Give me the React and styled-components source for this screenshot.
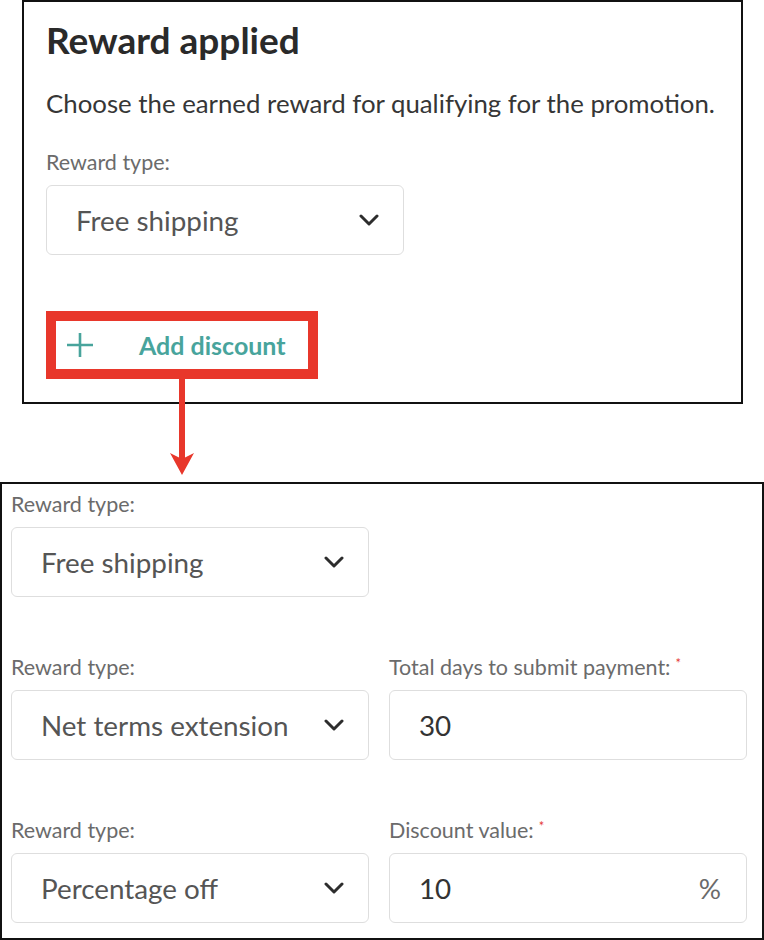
import React from "react";
import styled, { createGlobalStyle } from "styled-components";

const GlobalStyle = createGlobalStyle`
  * {
    box-sizing: border-box;
  }
  body {
    margin: 0;
    background: #fff;
    font-family: "Lato", "Noto Sans", sans-serif;
  }
`;

const Page = styled.div`
  width: 764px;
  height: 940px;
  position: relative;
`;

const TopCard = styled.section`
  margin-left: 22px;
  width: 721px;
  height: 404px;
  border: 2.5px solid #111;
  padding: 16px 22px 0 22px;
  position: relative;
`;

const Title = styled.h2`
  margin: 0;
  font-size: 37px;
  line-height: 44px;
  font-weight: 700;
  color: #2a2a2a;
`;

const Description = styled.p`
  margin: 27px 0 0;
  font-size: 25.8px;
  line-height: 28px;
  color: #363636;
  white-space: nowrap;
`;

const Label = styled.div`
  font-size: 21.5px;
  line-height: 22px;
  height: 22px;
  color: #6b6b6b;
  margin-bottom: 12px;
  white-space: nowrap;
`;

const Required = styled.span`
  color: #e53935;
  font-size: 13px;
  line-height: 0;
  vertical-align: 7px;
  margin-left: 5px;
`;

const Field = styled.div`
  margin-top: ${({ $top }) => $top || 0}px;
`;

const Box = styled.div`
  width: 358px;
  height: 70px;
  border: 1.5px solid #dedede;
  border-radius: 6px;
  display: flex;
  align-items: center;
  justify-content: space-between;
  padding: 0 24px 0 29px;
  font-size: 27.8px;
  color: ${({ $dark }) => ($dark ? "#333" : "#555")};
  background: #fff;
  white-space: nowrap;
`;

const Chevron = () => (
  <svg width="20" height="12" viewBox="0 0 20 12">
    <polyline
      points="2,2 10,10 18,2"
      fill="none"
      stroke="#2d2d2d"
      strokeWidth="3"
      strokeLinecap="round"
      strokeLinejoin="round"
    />
  </svg>
);

const Unit = styled.span`
  color: #6a6a6a;
  margin-right: 1px;
`;

const Highlight = styled.div`
  margin-top: 56px;
  width: 272px;
  height: 68px;
  border: 10px solid #e8372b;
  position: relative;
`;

const AddButton = styled.button`
  all: unset;
  display: flex;
  align-items: center;
  height: 100%;
  padding-left: 10px;
  gap: 45px;
  font-family: "Lato", sans-serif;
  font-size: 25px;
  font-weight: 700;
  color: #48a49c;
  cursor: pointer;
  white-space: nowrap;
`;

const Arrow = styled.svg`
  position: absolute;
  left: 50%;
  top: 100%;
  transform: translateX(-50%);
  z-index: 2;
  overflow: visible;
`;

const BottomCard = styled.section`
  margin-top: 78px;
  width: 764px;
  height: 458px;
  border: 2px solid #111;
  padding: 9px 15px 0 9px;
`;

const Grid = styled.div`
  display: grid;
  grid-template-columns: 358px 358px;
  column-gap: 20px;
  row-gap: 59px;
  align-items: start;
`;

const Plus = () => (
  <svg width="28" height="28" viewBox="0 0 28 28">
    <path d="M14 2v24M1 14h26" stroke="#48a49c" strokeWidth="2.6" />
  </svg>
);

const Select = ({ label, value }) => (
  <Field>
    <Label>{label}</Label>
    <Box>
      <span>{value}</span>
      <Chevron />
    </Box>
  </Field>
);

const NumberInput = ({ label, value, unit }) => (
  <Field>
    <Label>
      {label}
      <Required>*</Required>
    </Label>
    <Box $dark>
      <span>{value}</span>
      {unit && <Unit>{unit}</Unit>}
    </Box>
  </Field>
);

export default function App() {
  return (
    <Page>
      <GlobalStyle />
      <TopCard>
        <Title>Reward applied</Title>
        <Description>
          Choose the earned reward for qualifying for the promotion.
        </Description>
        <Field $top={34}>
          <Label>Reward type:</Label>
          <Box>
            <span>Free shipping</span>
            <Chevron />
          </Box>
        </Field>
        <Highlight>
          <AddButton>
            <Plus />
            Add discount
          </AddButton>
          <Arrow width="24" height="106" viewBox="0 0 24 106">
            <rect x="9" y="0" width="6" height="90" fill="#e8372b" />
            <polygon points="0,84 12,106 24,84 12,90" fill="#e8372b" />
          </Arrow>
        </Highlight>
      </TopCard>
      <BottomCard>
        <Grid>
          <Select label="Reward type:" value="Free shipping" />
          <div />
          <Select label="Reward type:" value="Net terms extension" />
          <NumberInput label="Total days to submit payment:" value="30" />
          <Select label="Reward type:" value="Percentage off" />
          <NumberInput label="Discount value:" value="10" unit="%" />
        </Grid>
      </BottomCard>
    </Page>
  );
}
